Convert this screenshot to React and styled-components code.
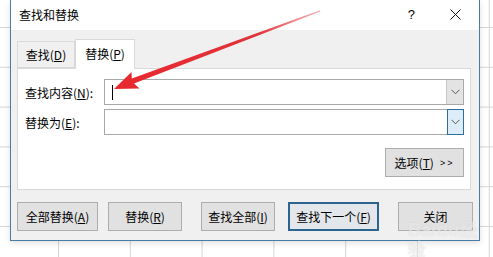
import React from "react";
import styled, { createGlobalStyle } from "styled-components";

const GlobalStyle = createGlobalStyle`
  html, body {
    margin: 0;
    padding: 0;
    background: #ffffff;
  }
  body {
    font-family: "Noto Sans CJK SC", "Liberation Sans", sans-serif;
    font-size: 12px;
    color: #000;
  }
`;

function App() {
  return (
    <>
      <GlobalStyle />
      <Sheet>
        <Dialog>
          <TitleBar>
            <Title>查找和替换</Title>
            <Help>?</Help>
            <CloseX viewBox="0 0 11 11">
              <path d="M0.5 0.5 L10.5 10.5 M10.5 0.5 L0.5 10.5" stroke="#111" strokeWidth="1" />
            </CloseX>
          </TitleBar>
          <Body>
            <Tabs>
              <Tab>
                查找(<u>D</u>)
              </Tab>
              <Tab $active>
                替换(<u>P</u>)
              </Tab>
            </Tabs>
            <Panel>
              <Row>
                <Label>
                  查找内容(<u>N</u>):
                </Label>
                <Combo>
                  <Field>
                    <Caret />
                  </Field>
                  <DropBtn>
                    <Chevron />
                  </DropBtn>
                </Combo>
              </Row>
              <Row $gap={4}>
                <Label>
                  替换为(<u>E</u>):
                </Label>
                <Combo>
                  <Field />
                  <DropBtn $focus>
                    <Chevron />
                  </DropBtn>
                </Combo>
              </Row>
              <OptionsRow>
                <Button $w={79}>
                  选项(<u>T</u>) <Arrows>&gt;&gt;</Arrows>
                </Button>
              </OptionsRow>
            </Panel>
            <Footer>
              <Button $w={81}>
                全部替换(<u>A</u>)
              </Button>
              <Button $w={74} $ml={10}>
                替换(<u>R</u>)
              </Button>
              <Button $w={74} $ml={19}>
                查找全部(<u>I</u>)
              </Button>
              <Button $w={91} $ml={13} $default>
                查找下一个(<u>F</u>)
              </Button>
              <Button $w={75} $ml={19}>
                关闭
              </Button>
            </Footer>
          </Body>
        </Dialog>
        <ArrowMark viewBox="0 0 493 257">
          <defs>
            <linearGradient id="redfade" x1="115" y1="88" x2="320" y2="11" gradientUnits="userSpaceOnUse">
              <stop offset="0" stopColor="#e8282e" />
              <stop offset="0.7" stopColor="#e0343a" />
              <stop offset="1" stopColor="#e86a6e" stopOpacity="0.5" />
            </linearGradient>
          </defs>
          <polygon
            points="114,89 131.5,72 131.8,78.5 320,10.3 320.4,11.6 134,83.6 139.5,88.6"
            fill="url(#redfade)"
          />
        </ArrowMark>
        <Watermark>
          Bai<Paw>du</Paw>经验
          <small>jingyan.baidu.com</small>
        </Watermark>
      </Sheet>
    </>
  );
}

export default App;

const Sheet = styled.div`
  position: relative;
  width: 493px;
  height: 257px;
  overflow: hidden;
  background-color: #fff;
  background-image: linear-gradient(to right, #d6d6d6 1px, transparent 1px),
    linear-gradient(to bottom, #d6d6d6 1px, transparent 1px);
  background-size: 71.8px 100%, 100% 39.8px;
  background-position: 58px 0, 0 27px;
`;

const Dialog = styled.div`
  box-sizing: border-box;
  margin-left: 10px;
  width: 470px;
  height: 241px;
  display: flex;
  flex-direction: column;
  border: 1px solid #4a7ba0;
  border-top: none;
  box-shadow: 0 2px 6px rgba(0, 0, 0, 0.12);
`;

const TitleBar = styled.div`
  height: 30px;
  background: #fff;
  display: flex;
  align-items: center;
  padding-left: 8px;
  padding-right: 18px;
  flex-shrink: 0;
`;

const Title = styled.div`
  flex: 1;
  font-size: 12px;
  margin-top: -2px;
`;

const Help = styled.div`
  font-family: "Liberation Sans", sans-serif;
  font-size: 13px;
  margin-right: 35px;
  margin-top: -2px;
`;

const CloseX = styled.svg`
  width: 11px;
  height: 11px;
  margin-top: -2px;
`;

const Body = styled.div`
  flex: 1;
  background: #f0f0f0;
  padding: 9px 6px 0 6px;
  display: flex;
  flex-direction: column;
`;

const Tabs = styled.div`
  display: flex;
  align-items: flex-end;
  height: 29px;
  position: relative;
  z-index: 1;
`;

const Tab = styled.div`
  box-sizing: border-box;
  height: ${(p) => (p.$active ? 30 : 27)}px;
  width: ${(p) => (p.$active ? 60 : 58)}px;
  margin-bottom: ${(p) => (p.$active ? -1 : 0)}px;
  background: ${(p) => (p.$active ? "#fff" : "#f0f0f0")};
  border: 1px solid #d9d9d9;
  border-bottom: ${(p) => (p.$active ? "none" : "1px solid #d9d9d9")};
  display: flex;
  align-items: center;
  justify-content: center;
  padding-bottom: ${(p) => (p.$active ? 2 : 0)}px;
`;

const Panel = styled.div`
  box-sizing: border-box;
  height: 122px;
  margin-right: 2px;
  background: #fff;
  border: 1px solid #d9d9d9;
  padding: 10px 6px 0 7px;
  display: flex;
  flex-direction: column;
`;

const Row = styled.div`
  display: flex;
  align-items: center;
  height: 26px;
  margin-top: ${(p) => p.$gap || 0}px;
`;

const Label = styled.div`
  width: 79px;
  flex-shrink: 0;
`;

const Combo = styled.div`
  flex: 1;
  box-sizing: border-box;
  height: 26px;
  display: flex;
  border: 1px solid #a8a8a8;
  background: #fff;
`;

const Field = styled.div`
  flex: 1;
  display: flex;
  align-items: center;
  padding-left: 7px;
`;

const Caret = styled.div`
  width: 1px;
  height: 15px;
  background: #000;
`;

const DropBtn = styled.div`
  box-sizing: border-box;
  width: 17px;
  height: ${(p) => (p.$focus ? 26 : 24)}px;
  margin: ${(p) => (p.$focus ? "-1px -1px -1px 0" : "0")};
  display: flex;
  align-items: center;
  justify-content: center;
  background: ${(p) => (p.$focus ? "#dcecf8" : "#e3e3e3")};
  border: ${(p) => (p.$focus ? "1px solid #2f6e9b" : "none")};
  border-left: 1px solid ${(p) => (p.$focus ? "#2f6e9b" : "#c8c8c8")};
`;

const Chevron = () => (
  <svg width="9" height="6" viewBox="0 0 9 6">
    <path d="M0.5 0.8 L4.5 4.8 L8.5 0.8" fill="none" stroke="#555" strokeWidth="1" />
  </svg>
);

const OptionsRow = styled.div`
  display: flex;
  justify-content: flex-end;
  margin-top: 13px;
`;

const Button = styled.div`
  box-sizing: border-box;
  width: ${(p) => p.$w}px;
  height: 29px;
  margin-left: ${(p) => p.$ml || 0}px;
  display: flex;
  align-items: center;
  justify-content: center;
  background: ${(p) => (p.$default ? "#e3e6ea" : "#e1e1e1")};
  border: ${(p) => (p.$default ? "2px solid #2b648f" : "1px solid #adadad")};
  white-space: nowrap;
  flex-shrink: 0;
`;

const Arrows = styled.span`
  font-family: "Liberation Sans", sans-serif;
  font-size: 9px;
  letter-spacing: 2px;
  margin-left: 6px;
`;

const Footer = styled.div`
  display: flex;
  margin-top: 12px;
`;

const ArrowMark = styled.svg`
  position: absolute;
  left: 0;
  top: 0;
  width: 493px;
  height: 257px;
  pointer-events: none;
`;

const Watermark = styled.div`
  position: absolute;
  left: 408px;
  top: 221px;
  font-family: "Liberation Sans", sans-serif;
  font-size: 18px;
  font-weight: bold;
  color: rgba(255, 255, 255, 0.5);
  text-shadow: 0 0 1px rgba(150, 150, 150, 0.3);
  line-height: 19px;
  pointer-events: none;
  small {
    display: block;
    font-size: 6px;
    font-weight: normal;
    line-height: 7px;
    color: rgba(190, 190, 190, 0.45);
    text-shadow: none;
  }
`;

const Paw = styled.span`
  margin: 0 1px;
`;
